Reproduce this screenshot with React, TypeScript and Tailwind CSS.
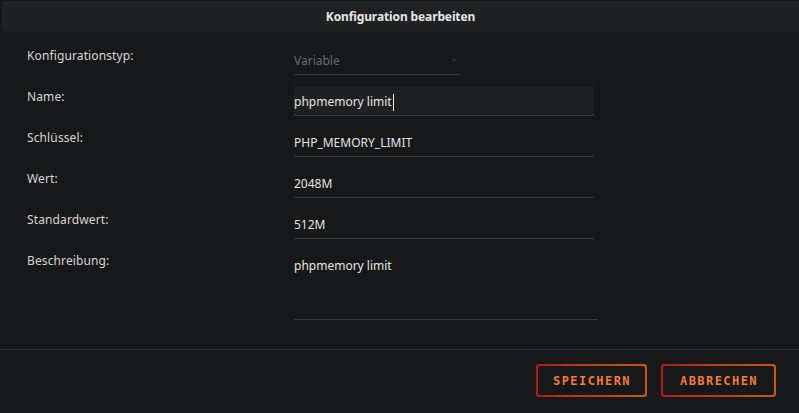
import React from "react";

const font = { fontFamily: '"Noto Sans", "Open Sans", sans-serif' };

function Row({ label, children }: { label: string; children: React.ReactNode }) {
  return (
    <div className="flex items-start mb-[12px]">
      <div className="w-[267px] pt-[2px] text-[12px] leading-[16px] text-[#d6d6d6] tracking-[0.01em]">{label}</div>
      {children}
    </div>
  );
}

function Field({ value, active }: { value: string; active?: boolean }) {
  return (
    <div
      className={`w-[300px] h-[29px] border-b border-[#3a3a3c] flex items-center text-[12px] text-[#e4e4e4] ${
        active ? "bg-[#1f2022]" : ""
      }`}
    >
      <span className="pt-[2px]">{value}</span>
      {active && <span className="ml-[1px] mt-[2px] w-[1px] h-[17px] bg-[#e8e8e8]" />}
    </div>
  );
}

export default function App() {
  return (
    <div className="w-[799px] h-[413px] bg-[#17181a] overflow-hidden flex flex-col" style={font}>
      <div className="mt-[1px] ml-[2px] h-[31px] bg-[#1f2223] rounded-bl-[5px] flex items-center justify-center">
        <span className="text-[12px] font-bold text-[#e6e6e6] tracking-[-0.01em]">Konfiguration bearbeiten</span>
      </div>
      <div className="pt-[14px] pl-[27px]">
        <Row label="Konfigurationstyp:">
          <div className="w-[166px] h-[29px] border-b border-[#3a3a36] flex items-center justify-between text-[12px] text-[#6a6a6a]">
            <span className="pt-[2px]">Variable</span>
            <span className="text-[8px] text-[#2e2f30] mr-[2px]">▼</span>
          </div>
        </Row>
        <Row label="Name:">
          <Field value="phpmemory limit" active />
        </Row>
        <Row label="Schlüssel:">
          <Field value="PHP_MEMORY_LIMIT" />
        </Row>
        <Row label="Wert:">
          <Field value="2048M" />
        </Row>
        <Row label="Standardwert:">
          <Field value="512M" />
        </Row>
        <div className="flex items-start">
          <div className="w-[267px] pt-[2px] text-[12px] leading-[16px] text-[#d6d6d6] tracking-[0.01em]">Beschreibung:</div>
          <div className="w-[304px] h-[69px] border-b border-[#3a3a3c] text-[12px] text-[#e4e4e4] pt-[6px]">
            phpmemory limit
          </div>
        </div>
      </div>
      <div className="mt-[29px] h-[1px] bg-[#333436]" />
      <div className="flex justify-end gap-[14px] pr-[23px] pt-[14px]">
        {["SPEICHERN", "ABBRECHEN"].map((t) => (
          <div
            key={t}
            className="p-[2px] rounded-[3px] bg-gradient-to-r from-[#b8181a] to-[#c65a08]"
          >
            <div
              className={`h-[29px] rounded-[2px] bg-[#17181a] flex items-center justify-center ${
                t === "SPEICHERN" ? "w-[107px]" : "w-[111px]"
              }`}
            >
              <span
                className="text-[12px] font-bold tracking-[0.12em] text-[#f27c32] pl-[1px]"
                style={{ fontFamily: '"DejaVu Sans Mono", monospace' }}
              >
                {t}
              </span>
            </div>
          </div>
        ))}
      </div>
    </div>
  );
}
